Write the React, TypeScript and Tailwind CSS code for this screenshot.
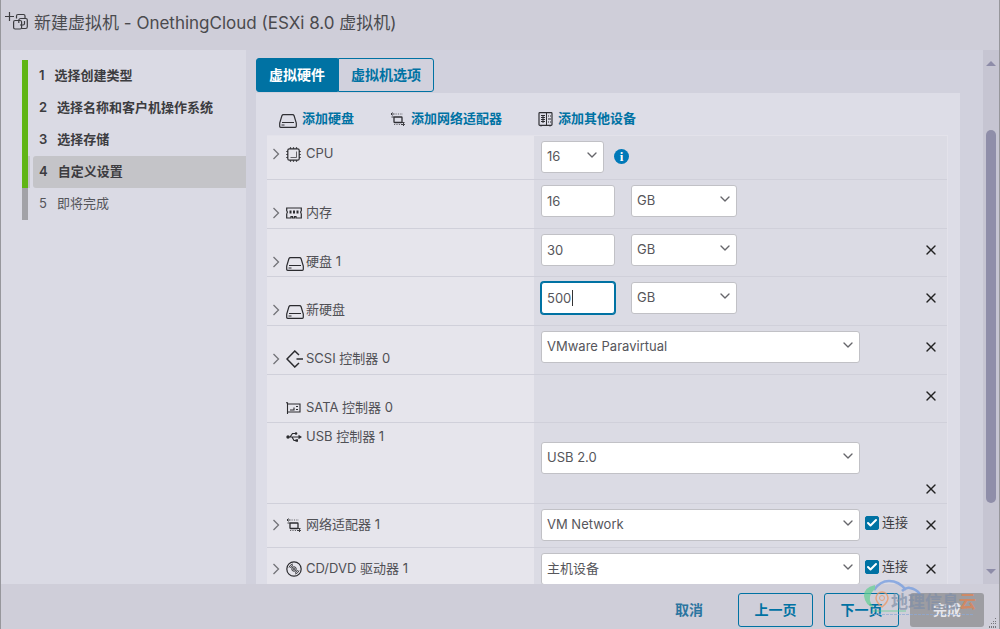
import React, { useState } from "react";
import { Check, ChevronDown, X } from "lucide-react";
import clsx from "clsx";

const steps = ["选择创建类型", "选择名称和客户机操作系统", "选择存储", "自定义设置", "即将完成"];
const CURRENT_STEP = 3;

const iconProps = {
  fill: "none",
  stroke: "currentColor",
  "aria-hidden": true,
} as const;

const NewVmIcon = () => (
  <svg width="24" height="20" viewBox="0 0 24 20" strokeWidth="1.2" {...iconProps}>
    <path d="M0 5.500h9M4.500 1v9" />
    <rect x="8.600" y="9.500" width="8" height="8.500" rx="1.500" />
    <path d="M11.500 7.500V5q0-1.500 1.500-1.500h5.500q1.500 0 1.500 1.500v3M16.500 17.500h4q1.800 0 1.800-1.800V9q0-1.500-1.500-1.500h-5q-2 0-2 2V12M19.500 10v2.500q0 1.500-1.500 1.500h-3" />
  </svg>
);

const DiskIcon = () => (
  <svg width="18" height="17" viewBox="0 -3 18 17" strokeWidth="1.2" {...iconProps}>
    <path d="M4.500 0.700h9q1.200 0 1.600 1.100L17.300 9v3.300q0 1-1 1H1.700q-1 0-1-1V9l2.200-7.200q.4-1.100 1.600-1.100z" />
    <path d="M3 8.500h12M2.500 11h3" strokeWidth="1" />
  </svg>
);

const NetworkIcon = () => (
  <svg width="16" height="15" viewBox="0 0 16 15" strokeWidth="0.9" {...iconProps}>
    <rect x="4" y="5" width="8" height="5.500" rx="0.500" strokeWidth="1.300" />
    <path d="M2.500 .5 1 2l1.500 1.500M1 2h3.500M13 11l1.500 1.500L13 14M14.500 12.500H11M1.500 5H4M12 10.500h2.500" />
    <path d="M5.500 2H13M4 12.500h6" strokeDasharray="1.200 1.200" strokeWidth="0.700" />
  </svg>
);

const DeviceIcon = () => (
  <svg width="15" height="15" viewBox="0 0 15 15" strokeWidth="1" {...iconProps}>
    <rect x="1" y="0.700" width="13" height="12.600" rx="0.800" strokeWidth="1.200" />
    <path d="M3 3.500h4M3 5.500h4M3 7.500h4M3 9.500h4M5 3v8M8.500 1v12M10 4h1M12 4h1M10 7h3M10 10h1M12 10h1M3 13v1.500M12 13v1.500" />
  </svg>
);

const CpuIcon = () => (
  <svg width="15" height="15" viewBox="0 0 15 15" strokeWidth="1.200" {...iconProps}>
    <rect x="1.800" y="1.800" width="11.400" height="11.400" rx="1.500" />
    <path d="M4.500 10.500h6v-6" strokeWidth="0.700" />
    <path d="M4.500 .3v1.500M7.500 .3v1.500M10.500 .3v1.500M4.500 13.200v1.500M7.500 13.200v1.500M10.500 13.200v1.500M.3 4.500h1.500M.3 7.500h1.500M.3 10.500h1.500M13.200 4.500h1.500M13.200 7.500h1.500M13.200 10.500h1.500" />
  </svg>
);

const MemoryIcon = () => (
  <svg width="16" height="12" viewBox="0 0 16 12" strokeWidth="1.200" {...iconProps}>
    <path d="M.7 4V1h14.600v3M.7 6.500V11H5V9.500h1.500V11h2V9.500H10V11h5.300V6.500M.7 4q1.300 1.200 0 2.500M15.300 4q-1.300 1.200 0 2.500" />
    <path d="M4.500 3.500v3M8 3.500v3M11.500 3.500v3" strokeWidth="2" />
  </svg>
);

const ScsiIcon = () => (
  <svg width="18" height="18" viewBox="0 0 18 18" strokeWidth="1.500" {...iconProps}>
    <path d="m13 5-4.200-4L1 9l7.800 8 4.200-4M10.500 9H17" />
  </svg>
);

const SataIcon = () => (
  <svg width="15" height="12" viewBox="0 0 15 12" strokeWidth="1.100" {...iconProps}>
    <path d="M0 .8h1.500V12M1.500 2H14v8H1.500M4 8h4V5.500M10 7.500h2M10 4.500h2" />
  </svg>
);

const UsbIcon = () => (
  <svg width="16" height="12" viewBox="0 0 16 12" strokeWidth="1.200" {...iconProps}>
    <path d="M2 6h11M4 6l2.500-3.500H9M6 6l2 3.500h2" />
    <circle cx="2" cy="6" r="1.700" fill="currentColor" stroke="none" />
    <circle cx="10" cy="2.500" r="1.300" fill="currentColor" stroke="none" />
    <path d="M9.500 8.300H12v2.400H9.500zM12.500 3.800 16 6l-3.500 2.200z" fill="currentColor" stroke="none" />
  </svg>
);

const DiscIcon = () => (
  <svg width="16" height="16" viewBox="0 0 16 16" strokeWidth="1" {...iconProps}>
    <circle cx="8" cy="8" r="7.200" strokeWidth="1.200" />
    <circle cx="8" cy="8" r="2.200" />
    <circle cx="8" cy="8" r="0.500" fill="currentColor" />
    <path d="M3 6.500Q4 3.800 6.800 3M4.500 7Q5.200 5.200 7 4.500M13 9.500q-1 2.700-3.800 3.500M11.500 9q-.7 1.800-2.500 2.500" />
  </svg>
);

const CaretIcon = () => (
  <svg width="8" height="12" viewBox="0 0 8 12" strokeWidth="1.300" {...iconProps}>
    <path d="m1.500 1 5 5-5 5" />
  </svg>
);

const fieldClass = "h-8 rounded-[3px] border bg-white px-[5px] text-[13px] text-[#56565b]";

interface SelectProps {
  label: string;
  options: string[];
  className?: string;
}

const Select: React.FC<SelectProps> = ({ label, options, className }) => (
  <span className={clsx("relative inline-block", className)}>
    <select aria-label={label} className={clsx(fieldClass, "w-full appearance-none border-[#c1c1c6] pr-6")}>
      {options.map((option) => (
        <option key={option}>{option}</option>
      ))}
    </select>
    <ChevronDown
      size={16}
      strokeWidth={2}
      className="pointer-events-none absolute top-[6px] right-1 text-[#66666b]"
    />
  </span>
);

interface SizeFieldProps {
  label: string;
  value: string;
  active?: boolean;
}

const SizeField: React.FC<SizeFieldProps> = ({ label, value, active }) => (
  <>
    <span className="relative mr-4 inline-block w-[74px]">
      <input
        type="text"
        aria-label={label}
        defaultValue={value}
        className={clsx(
          fieldClass,
          "w-full outline-none",
          active ? "border-[#0072a3] ring-1 ring-[#0072a3]" : "border-[#c1c1c6]"
        )}
      />
      {active && <span aria-hidden className="absolute top-2 left-[31px] h-4 w-px bg-[#333]" />}
    </span>
    <Select label={`${label}单位`} options={["GB", "MB", "TB"]} className="w-[106px]" />
  </>
);

const ConnectCheckbox = ({ id }: { id: string }) => (
  <label htmlFor={id} className="relative ml-[5px] flex h-7 items-center gap-[3px] text-[13px] text-[#3c3c40]">
    <input
      id={id}
      type="checkbox"
      defaultChecked
      className="peer size-[14px] appearance-none rounded-[2px] border border-[#0072a3] checked:bg-[#0072a3]"
    />
    <Check
      size={12}
      strokeWidth={4}
      className="pointer-events-none absolute left-px hidden text-white peer-checked:block"
    />
    连接
  </label>
);

interface HardwareRowProps {
  name: string;
  icon: React.ReactNode;
  height: string;
  labelClass?: string;
  bodyClass?: string;
  expandable?: boolean;
  removable?: boolean;
  removeClass?: string;
  children?: React.ReactNode;
}

const HardwareRow: React.FC<HardwareRowProps> = ({
  name,
  icon,
  height,
  labelClass = "pt-[23px]",
  bodyClass = "pt-[5px]",
  expandable = true,
  removable = true,
  removeClass = "h-8 self-start",
  children,
}) => (
  <div className={clsx("flex shrink-0 border-b border-[#d0d0da]", height)}>
    <div className={clsx("w-[267px] shrink-0 bg-[#e6e5ec] pl-[5px]", labelClass)}>
      <div className="flex h-5 items-center text-[13px] text-[#505055]">
        <span className="w-[14px] shrink-0">
          {expandable && (
            <button type="button" aria-label={`展开 ${name}`} className="block text-[#737378]">
              <CaretIcon />
            </button>
          )}
        </span>
        <span className="flex w-5 shrink-0 text-[#2b2b2f]">{icon}</span>
        <span className="whitespace-nowrap">{name}</span>
      </div>
    </div>
    <div className={clsx("flex min-w-0 flex-1 items-start pl-[7px]", bodyClass)}>
      {children}
      {removable && (
        <button
          type="button"
          aria-label={`移除 ${name}`}
          className={clsx("ml-auto flex w-[33px] shrink-0 items-center justify-center text-[#222]", removeClass)}
        >
          <X size={16} strokeWidth={2} />
        </button>
      )}
    </div>
  </div>
);

const ToolbarButton = ({ icon, children }: { icon: React.ReactNode; children: React.ReactNode }) => (
  <button type="button" className="flex items-center gap-[5px] whitespace-nowrap text-[#0072a3]">
    <span className="text-[#2f2f34]">{icon}</span>
    {children}
  </button>
);

const Watermark = () => (
  <div aria-hidden className="pointer-events-none absolute right-[21px] bottom-[8px] w-[118px] opacity-70">
    <svg className="absolute bottom-0 left-0" width="118" height="42" viewBox="0 0 118 42" fill="none">
      <path d="M14 11Q20 2 29 2q10 0 17 9M42 12q4-4 8-3 6 1 10 6" stroke="#6d98e0" strokeWidth="2.500" />
      <path d="M15 6Q3 9 4 17q1 9 10 12-5-6-4-11 1-5 5-8z" fill="#5fd092" />
      <path d="M12 32h34" stroke="#55d08b" />
      <path d="M22 28q-6-5-6-9a6 6 0 0 1 12 0q0 4-6 9z" stroke="#f0935a" strokeWidth="1.500" />
      <circle cx="22" cy="19" r="2.500" stroke="#f0935a" />
      <path d="M14 35.500h100" stroke="#8ba9d8" strokeDasharray="3 1" />
    </svg>
    <p className="relative pb-[7px] pl-[31px] text-[17px] leading-6 font-bold whitespace-nowrap text-[#7f8ea8]">
      地理信息<span className="text-[#e5814d]">云</span>
    </p>
  </div>
);

export default function App() {
  const [tab, setTab] = useState("hardware");

  return (
    <div className="flex h-screen flex-col overflow-hidden border-x border-[#97979c] bg-[#cfced9] font-['Inter','Noto_Sans_CJK_SC',sans-serif] text-[#3c3c40]">
      <header className="flex h-[50px] shrink-0 items-start gap-[5px] pl-1">
        <span className="mt-[11px] text-[#3c3c40]">
          <NewVmIcon />
        </span>
        <h1 className="mt-[11px] text-[17px] leading-6 whitespace-nowrap text-[#4a4a4e]">
          新建虚拟机 - OnethingCloud (ESXi 8.0 虚拟机)
        </h1>
      </header>

      <div className="flex min-h-0 flex-1">
        <nav className="w-[245px] shrink-0 bg-[#dadae4] pt-[10px] pl-[21px]">
          <ol>
            {steps.map((step, index) => (
              <li
                key={step}
                className={clsx(
                  "flex border-l-[6px]",
                  index <= CURRENT_STEP ? "border-[#60b515]" : "border-[#a2a2a7]"
                )}
              >
                <span className={clsx("mr-[3px] w-[2px]", index === CURRENT_STEP && "bg-[#c4c4c8]")} />
                <button
                  type="button"
                  aria-current={index === CURRENT_STEP ? "step" : undefined}
                  className={clsx(
                    "flex h-8 flex-1 items-center gap-[10px] rounded-l-[3px] pl-[6px] text-[13px] whitespace-nowrap",
                    index === CURRENT_STEP && "bg-[#c4c4c8]",
                    index <= CURRENT_STEP ? "font-semibold text-[#3c3c40]" : "text-[#55555a]"
                  )}
                >
                  <span>{index + 1}</span>
                  {step}
                </button>
              </li>
            ))}
          </ol>
        </nav>

        <main className="flex min-w-0 flex-1 flex-col overflow-hidden bg-[#d1d1dd] pt-2 pr-[23px] pl-[10px]">
          <div role="tablist" className="flex h-[35px] shrink-0 text-sm font-bold">
            <button
              type="button"
              role="tab"
              aria-selected={tab === "hardware"}
              onClick={() => setTab("hardware")}
              className={clsx(
                "h-[34px] rounded-l-[3px] border border-[#0072a3] px-3",
                tab === "hardware" ? "bg-[#0072a3] text-white" : "text-[#0072a3]"
              )}
            >
              虚拟硬件
            </button>
            <button
              type="button"
              role="tab"
              aria-selected={tab === "options"}
              onClick={() => setTab("options")}
              className={clsx(
                "h-[34px] rounded-r-[3px] border border-[#0072a3] px-3",
                tab === "options" ? "bg-[#0072a3] text-white" : "text-[#0072a3]"
              )}
            >
              虚拟机选项
            </button>
          </div>

          <section className="flex min-h-0 flex-1 flex-col overflow-hidden bg-[#dddde7] pr-3 pl-[11px]">
            <div className="flex h-[42px] shrink-0 items-center gap-9 pt-[10px] pl-3 text-[13px] font-bold">
              <ToolbarButton icon={<DiskIcon />}>添加硬盘</ToolbarButton>
              <ToolbarButton icon={<NetworkIcon />}>添加网络适配器</ToolbarButton>
              <ToolbarButton icon={<DeviceIcon />}>添加其他设备</ToolbarButton>
            </div>

            <div className="flex flex-col border-t border-r border-[#e3e2ea] bg-[#dbdbe4]">
              <HardwareRow
                name="CPU"
                icon={<CpuIcon />}
                height="h-11"
                labelClass="pt-2"
                removable={false}
              >
                <Select label="CPU" options={["16", "8", "4", "2", "1"]} className="w-[63px]" />
                <button
                  type="button"
                  aria-label="CPU 信息"
                  className="mt-2 ml-[10px] size-[15px] rounded-full bg-[#0079b8] font-['Liberation_Serif',serif] text-[13px] leading-[15px] font-bold text-white"
                >
                  i
                </button>
              </HardwareRow>
              <HardwareRow name="内存" icon={<MemoryIcon />} height="h-[49px]" removable={false}>
                <SizeField label="内存" value="16" />
              </HardwareRow>
              <HardwareRow name="硬盘 1" icon={<DiskIcon />} height="h-12">
                <SizeField label="硬盘 1" value="30" />
              </HardwareRow>
              <HardwareRow name="新硬盘" icon={<DiskIcon />} height="h-[49px]">
                <SizeField label="新硬盘" value="500" active />
              </HardwareRow>
              <HardwareRow name="SCSI 控制器 0" icon={<ScsiIcon />} height="h-[49px]">
                <Select
                  label="SCSI 控制器类型"
                  options={["VMware Paravirtual", "LSI Logic SAS"]}
                  className="w-[319px]"
                />
              </HardwareRow>
              <HardwareRow name="SATA 控制器 0" icon={<SataIcon />} height="h-12" expandable={false} />
              <HardwareRow
                name="USB 控制器 1"
                icon={<UsbIcon />}
                height="h-[81px]"
                labelClass="pt-1"
                bodyClass="pt-[19px]"
                expandable={false}
                removeClass="h-7 self-end"
              >
                <Select label="USB 控制器类型" options={["USB 2.0", "USB 3.1"]} className="w-[319px]" />
              </HardwareRow>
              <HardwareRow name="网络适配器 1" icon={<NetworkIcon />} height="h-11" labelClass="pt-[11px]">
                <Select label="网络适配器 1" options={["VM Network"]} className="w-[319px]" />
                <ConnectCheckbox id="network-connect" />
              </HardwareRow>
              <HardwareRow name="CD/DVD 驱动器 1" icon={<DiscIcon />} height="h-11" labelClass="pt-[11px]">
                <Select label="CD/DVD 驱动器 1" options={["主机设备", "数据存储 ISO 文件"]} className="w-[319px]" />
                <ConnectCheckbox id="cd-connect" />
              </HardwareRow>
            </div>
          </section>
        </main>

        <div aria-hidden className="flex w-4 shrink-0 flex-col items-center bg-[#c6c5d2] pt-[11px] pb-[10px]">
          <svg width="10" height="5" viewBox="0 0 10 5" fill="#8d8ca8">
            <path d="M5 0 10 5H0z" />
          </svg>
          <div className="mt-16 mb-[66px] w-[10px] flex-1 rounded-full bg-[#8f8ea9]" />
          <svg width="10" height="5" viewBox="0 0 10 5" fill="#8d8ca8">
            <path d="M0 0h10L5 5z" />
          </svg>
        </div>
      </div>

      <footer className="relative flex h-[45px] shrink-0 items-center justify-end gap-[11px] pt-[6px] pr-[15px] text-sm font-bold">
        <button type="button" className="mr-3 h-[34px] px-3 text-[#2b75a0]">
          取消
        </button>
        <button type="button" className="h-[34px] w-[75px] rounded-[3px] border border-[#0072a3] text-[#0072a3]">
          上一页
        </button>
        <button type="button" className="h-[34px] w-[75px] rounded-[3px] border border-[#0072a3] text-[#0072a3]">
          下一页
        </button>
        <button type="button" className="h-[34px] w-[74px] rounded-[3px] bg-[#9d9da2] text-[#e6e6ec]">
          完成
        </button>
        <Watermark />
        <svg className="absolute right-0 bottom-0" width="12" height="12" viewBox="0 0 12 12" fill="#77777d" aria-hidden>
          <path d="M8 1h1v1H8zM6 4h1v1H6zM8 4h1v1H8zM4 6h1v1H4zM6 6h1v1H6zM8 6h1v1H8zM2 9h1v2H2zM4 9h1v2H4zM6 9h1v2H6zM8 9h1v2H8z" />
        </svg>
      </footer>
    </div>
  );
}
